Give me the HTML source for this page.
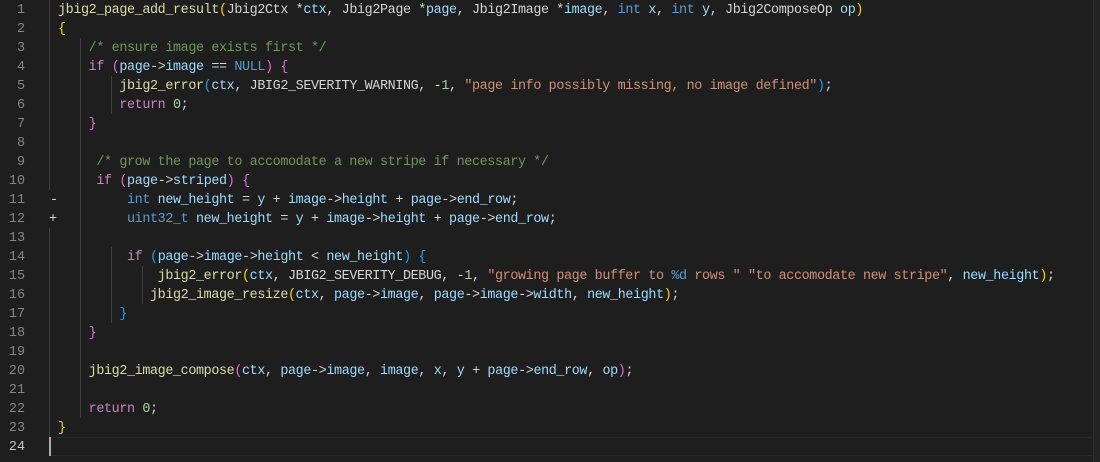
<!DOCTYPE html>
<html><head><meta charset="utf-8"><style>
body{margin:0;width:1100px;height:462px;background:#1e1e1e;overflow:hidden;position:relative;font-family:"Liberation Mono",monospace;font-size:13.4px;letter-spacing:-0.37px;color:#d4d4d4}
.ln{position:absolute;left:0;width:25px;text-align:right;color:#858585;height:19px;line-height:19px;letter-spacing:0;margin-top:1px}
.l{position:absolute;left:58px;white-space:pre;height:19px;line-height:19px;margin-top:1px}
.g{position:absolute;width:1px;background:#404040}
.f{color:#dcdcaa}.v{color:#9cdcfe}.k{color:#569cd6}.c{color:#c586c0}.m{color:#6a9955}.s{color:#ce9178}.n{color:#b5cea8}
.b1{color:#ffd700}.b2{color:#da70d6}.b3{color:#179fff}
</style></head><body>
<div style="position:absolute;left:50px;top:437px;width:1043px;height:17px;border:1px solid #282828;border-left:none"></div>
<div style="position:absolute;left:1093px;top:0;width:7px;height:462px;background:#232323;border-left:1px solid #2b2b2b"></div>
<div class="g" style="left:49px;top:0;height:190px"></div>
<div class="g" style="left:49px;top:228px;height:209px"></div>
<div style="position:absolute;left:49px;top:437px;width:2px;height:19px;background:#aeafad"></div>
<div class="g" style="left:80px;top:38px;height:380px"></div>
<div class="g" style="left:111px;top:76px;height:38px"></div>
<div class="g" style="left:111px;top:247px;height:76px"></div>
<div class="g" style="left:142px;top:266px;height:38px"></div>

<div class="ln" style="top:0">1</div><div class="ln" style="top:19px">2</div><div class="ln" style="top:38px">3</div><div class="ln" style="top:57px">4</div><div class="ln" style="top:76px">5</div><div class="ln" style="top:95px">6</div><div class="ln" style="top:114px">7</div><div class="ln" style="top:133px">8</div><div class="ln" style="top:152px">9</div><div class="ln" style="top:171px">10</div><div class="ln" style="top:190px">11</div><div class="ln" style="top:209px">12</div><div class="ln" style="top:228px">13</div><div class="ln" style="top:247px">14</div><div class="ln" style="top:266px">15</div><div class="ln" style="top:285px">16</div><div class="ln" style="top:304px">17</div><div class="ln" style="top:323px">18</div><div class="ln" style="top:342px">19</div><div class="ln" style="top:361px">20</div><div class="ln" style="top:380px">21</div><div class="ln" style="top:399px">22</div><div class="ln" style="top:418px">23</div><div class="ln" style="top:437px;color:#c6c6c6">24</div>
<div style="position:absolute;left:50px;top:191px;line-height:19px;color:#d4d4d4">-</div>
<div style="position:absolute;left:49px;top:210px;line-height:19px;color:#d4d4d4">+</div>

<div class="l" style="top:0"><span class="f">jbig2_page_add_result</span><span class="b1">(</span>Jbig2Ctx *<span class="v">ctx</span>, Jbig2Page *<span class="v">page</span>, Jbig2Image *<span class="v">image</span>, <span class="k">int</span> <span class="v">x</span>, <span class="k">int</span> <span class="v">y</span>, Jbig2ComposeOp <span class="v">op</span><span class="b1">)</span></div>
<div class="l" style="top:19px"><span class="b1">{</span></div>
<div class="l" style="top:38px">    <span class="m">/* ensure image exists first */</span></div>
<div class="l" style="top:57px">    <span class="c">if</span> <span class="b2">(</span><span class="v">page</span>-&gt;<span class="v">image</span> == <span class="k">NULL</span><span class="b2">)</span> <span class="b2">{</span></div>
<div class="l" style="top:76px">        <span class="f">jbig2_error</span><span class="b3">(</span><span class="v">ctx</span>, JBIG2_SEVERITY_WARNING, -<span class="n">1</span>, <span class="s">"page info possibly missing, no image defined"</span><span class="b3">)</span>;</div>
<div class="l" style="top:95px">        <span class="c">return</span> <span class="n">0</span>;</div>
<div class="l" style="top:114px">    <span class="b2">}</span></div>
<div class="l" style="top:152px">     <span class="m">/* grow the page to accomodate a new stripe if necessary */</span></div>
<div class="l" style="top:171px">     <span class="c">if</span> <span class="b2">(</span><span class="v">page</span>-&gt;<span class="v">striped</span><span class="b2">)</span> <span class="b2">{</span></div>
<div class="l" style="top:190px">         <span class="k">int</span> <span class="v">new_height</span> = <span class="v">y</span> + <span class="v">image</span>-&gt;<span class="v">height</span> + <span class="v">page</span>-&gt;<span class="v">end_row</span>;</div>
<div class="l" style="top:209px">         <span class="k">uint32_t</span> <span class="v">new_height</span> = <span class="v">y</span> + <span class="v">image</span>-&gt;<span class="v">height</span> + <span class="v">page</span>-&gt;<span class="v">end_row</span>;</div>
<div class="l" style="top:247px">         <span class="c">if</span> <span class="b3">(</span><span class="v">page</span>-&gt;<span class="v">image</span>-&gt;<span class="v">height</span> &lt; <span class="v">new_height</span><span class="b3">)</span> <span class="b3">{</span></div>
<div class="l" style="top:266px">             <span class="f">jbig2_error</span><span class="b1">(</span><span class="v">ctx</span>, JBIG2_SEVERITY_DEBUG, -<span class="n">1</span>, <span class="s">"growing page buffer to </span><span class="k">%d</span><span class="s"> rows " "to accomodate new stripe"</span>, <span class="v">new_height</span><span class="b1">)</span>;</div>
<div class="l" style="top:285px">            <span class="f">jbig2_image_resize</span><span class="b1">(</span><span class="v">ctx</span>, <span class="v">page</span>-&gt;<span class="v">image</span>, <span class="v">page</span>-&gt;<span class="v">image</span>-&gt;<span class="v">width</span>, <span class="v">new_height</span><span class="b1">)</span>;</div>
<div class="l" style="top:304px">        <span class="b3">}</span></div>
<div class="l" style="top:323px">    <span class="b2">}</span></div>
<div class="l" style="top:361px">    <span class="f">jbig2_image_compose</span><span class="b2">(</span><span class="v">ctx</span>, <span class="v">page</span>-&gt;<span class="v">image</span>, <span class="v">image</span>, <span class="v">x</span>, <span class="v">y</span> + <span class="v">page</span>-&gt;<span class="v">end_row</span>, <span class="v">op</span><span class="b2">)</span>;</div>
<div class="l" style="top:399px">    <span class="c">return</span> <span class="n">0</span>;</div>
<div class="l" style="top:418px"><span class="b1">}</span></div>
</body></html>
